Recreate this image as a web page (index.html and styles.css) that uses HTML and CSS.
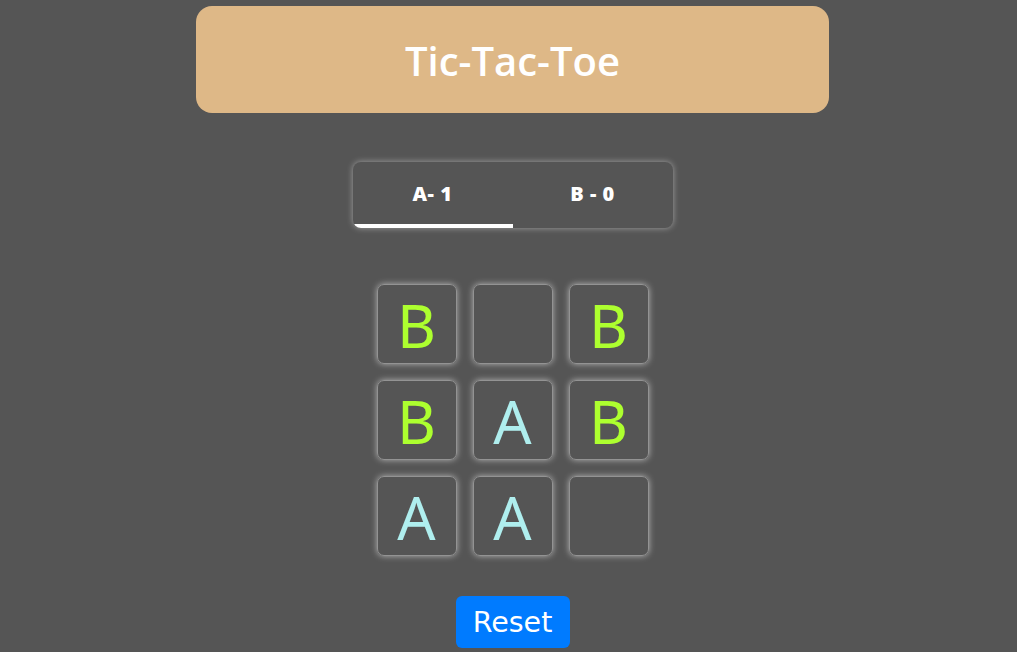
FILE: index.html
```html
<!DOCTYPE html>
<html lang="en">
<head>
<meta charset="utf-8">
<title>Tic-Tac-Toe</title>
<link rel="stylesheet" href="styles.css">
</head>
<body>
<div class="app">
  <header class="title-bar"><h1 class="title">Tic-Tac-Toe</h1></header>
  <div class="score">
    <div class="score-item active">A- 1</div>
    <div class="score-item">B - 0</div>
  </div>
  <div class="board">
    <div class="cell b">B</div>
    <div class="cell"></div>
    <div class="cell b">B</div>
    <div class="cell b">B</div>
    <div class="cell a">A</div>
    <div class="cell b">B</div>
    <div class="cell a">A</div>
    <div class="cell a">A</div>
    <div class="cell"></div>
  </div>
  <button class="reset">Reset</button>
</div>
</body>
</html>
```
FILE: styles.css
```css
html, body {
  margin: 0;
  padding: 0;
  background: #555555;
  height: 100%;
  overflow: hidden;
}
.app {
  display: flex;
  flex-direction: column;
  align-items: center;
  padding-top: 6px;
  padding-left: 8px;
  font-family: "Noto Sans", "DejaVu Sans", sans-serif;
}
.title-bar {
  width: 633px;
  height: 107px;
  box-sizing: border-box;
  background: #deb887;
  border-radius: 16px;
  display: flex;
  align-items: center;
  justify-content: center;
}
.title {
  margin: 0;
  color: #ffffff;
  font-family: "Open Sans", "Noto Sans", sans-serif;
  font-size: 40px;
  font-weight: 600;
  letter-spacing: 0;
  padding-top: 2px;
}
.score {
  margin-top: 49px;
  width: 320px;
  height: 66px;
  display: flex;
  border-radius: 8px;
  overflow: hidden;
  box-shadow: 0 0 6px rgba(255,255,255,0.45);
  background: #555555;
}
.score-item {
  flex: 1;
  display: flex;
  align-items: center;
  justify-content: center;
  color: #ffffff;
  font-family: "Open Sans", "Noto Sans", sans-serif;
  font-weight: 800;
  font-size: 20px;
  letter-spacing: 0.5px;
  border-bottom: 4px solid transparent;
}
.score-item.active {
  border-bottom-color: #ffffff;
}
.board {
  margin-top: 56px;
  display: grid;
  grid-template-columns: repeat(3, 80px);
  grid-auto-rows: 80px;
  gap: 16px;
}
.cell {
  box-sizing: border-box;
  border: 1px solid #939393;
  border-radius: 7px;
  box-shadow: 0 0 6px rgba(255,255,255,0.55);
  display: flex;
  align-items: center;
  justify-content: center;
  font-size: 60px;
  font-family: "Noto Sans", sans-serif;
  line-height: 1;
  padding-top: 2px;
}
.cell.a { color: #afeeee; }
.cell.b { color: #adff2f; }
.reset {
  margin-top: 40px;
  width: 114px;
  height: 52px;
  border: none;
  border-radius: 6px;
  background: #007bff;
  color: #ffffff;
  font-family: "DejaVu Sans", sans-serif;
  font-size: 28.5px;
  padding: 0;
}
```
